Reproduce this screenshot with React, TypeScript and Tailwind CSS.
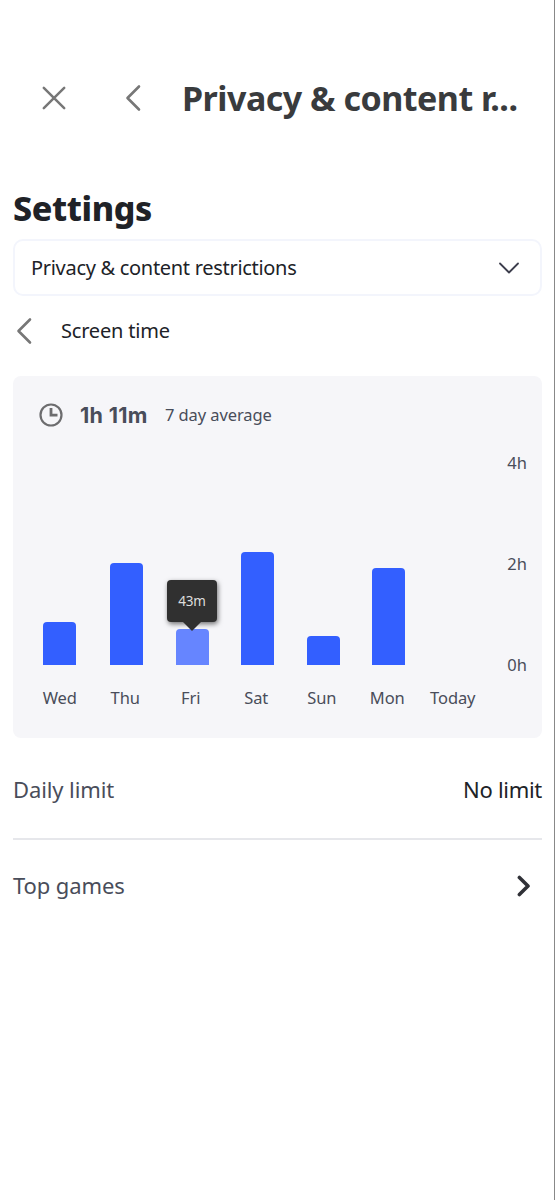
import { useState } from 'react'

interface Day {
  label: string
  minutes: number
  bar: string
}

const PX_PER_HOUR = 50.5

const days: Day[] = [
  { label: 'Wed', minutes: 51, bar: 'mr-[1.5px]' },
  { label: 'Thu', minutes: 121, bar: '' },
  { label: 'Fri', minutes: 43, bar: '' },
  { label: 'Sat', minutes: 134, bar: '' },
  { label: 'Sun', minutes: 35, bar: '' },
  { label: 'Mon', minutes: 115.5, bar: '' },
  { label: 'Today', minutes: 0, bar: '' }
]

function ChevronLeft({ className }: { className: string }) {
  return (
    <svg className={className} viewBox="0 0 16 28" fill="none" stroke="currentColor" strokeWidth="2.6" strokeLinecap="round" strokeLinejoin="round">
      <path d="M14 2.5 2.5 14 14 25.5" />
    </svg>
  )
}

function Header() {
  return (
    <header className="flex h-[60px] items-center text-[#777777]">
      <button className="ml-[42px]" aria-label="Close">
        <svg className="block size-6" viewBox="0 0 24 24" fill="none" stroke="currentColor" strokeWidth="2.5" strokeLinecap="round">
          <path d="M1.8 1.8 22.2 22.2M22.2 1.8 1.8 22.2" />
        </svg>
      </button>
      <button className="ml-[59px]" aria-label="Back">
        <ChevronLeft className="block h-7 w-4" />
      </button>
      <h1 className="ml-[41px] whitespace-nowrap text-[34px] leading-[44px] font-bold tracking-[-0.5px] text-[#393b3d]">
        Privacy &amp; content r...
      </h1>
    </header>
  )
}

function Tooltip({ text }: { text: string }) {
  return (
    <div className="absolute bottom-[calc(100%+7px)] left-1/2 flex h-[42px] w-[50px] -translate-x-1/2 items-center justify-center rounded-[4px] bg-[#303030] text-[13.5px] tracking-[-0.2px] text-[#dddddd] shadow-[1px_2px_5px_rgba(0,0,0,0.55)]">
      {text}
      <svg className="absolute top-full h-[9px] w-[18px]" viewBox="0 0 18 9">
        <path d="M0 0H18L9 9Z" fill="#303030" />
      </svg>
    </div>
  )
}

function Chart() {
  const [selected, setSelected] = useState('Fri')

  return (
    <div className="mt-[21px] flex">
      <div className="w-[459px] pl-[14px]">
        <div className="flex h-[214px] items-end gap-[32.5px] pl-4">
          {days.map((day) => (
            <button
              key={day.label}
              aria-label={day.label}
              className={`relative w-[33px] shrink-0 rounded-t-[4px] ${day.bar} ${
                selected === day.label ? 'bg-[#6685ff]' : 'bg-[#335fff]'
              }`}
              style={{ height: (day.minutes / 60) * PX_PER_HOUR }}
              onClick={() => setSelected(day.label)}
            >
              {selected === day.label && <Tooltip text="43m" />}
            </button>
          ))}
        </div>
        <div className="mt-[21px] flex w-[459px] text-[16.5px] leading-6 tracking-[-0.1px] text-[#494d5a]">
          {days.map((day) => (
            <span key={day.label} className="w-[65.5px] shrink-0 text-center">{day.label}</span>
          ))}
        </div>
      </div>
      <div className="flex h-[226px] flex-1 flex-col justify-between pr-[15px] text-right text-[16.5px] leading-6 text-[#494d5a]">
        <span>4h</span>
        <span>2h</span>
        <span>0h</span>
      </div>
    </div>
  )
}

export default function App() {
  return (
    <div className="h-[1200px] w-[555px] overflow-hidden border-r border-[#888888] bg-white pt-[68px] font-['Noto_Sans',sans-serif] text-[#202227]">
      <Header />

      <main className="ml-[13px] w-[529px]">
        <h2 className="mt-[58px] text-[34px] leading-[44px] font-extrabold tracking-[-0.4px]">Settings</h2>

        <button className="mt-[9px] flex h-[57px] w-full items-center justify-between rounded-[10px] border-2 border-[#f3f5fc] pr-[20px] pl-[16px] text-[20px] tracking-[-0.3px]">
          <span>Privacy &amp; content restrictions</span>
          <svg className="h-3 w-[22px]" viewBox="0 0 22 12" fill="none" stroke="#3d3e4d" strokeWidth="1.8" strokeLinecap="round" strokeLinejoin="round">
            <path d="M2 1.5 11 10.5 20 1.5" />
          </svg>
        </button>

        <div className="mt-[21px] flex h-7 items-center text-[20px] tracking-[-0.2px]">
          <ChevronLeft className="ml-[3px] h-7 w-4 text-[#777777]" />
          <span className="ml-[29px]">Screen time</span>
        </div>

        <section className="mt-[31px] h-[362px] rounded-lg bg-[#f6f6f9] pt-6">
          <div className="flex h-[30px] items-center text-[#494d5a]">
            <svg className="ml-[26px] size-6" viewBox="0 0 24 24" fill="none" stroke="#6d6d6f">
              <circle cx="12" cy="12" r="10.5" strokeWidth="2.2" />
              <path d="M12 5V12.2H18.5" strokeWidth="2.8" />
            </svg>
            <span className="ml-[17px] w-[85px] font-['Inter','Noto_Sans',sans-serif] text-[21.5px] font-bold tracking-[0.3px]">1h 11m</span>
            <span className="text-[16.5px] tracking-[-0.1px]">7 day average</span>
          </div>
          <Chart />
        </section>

        <div className="flex h-[102px] items-center justify-between border-b-2 border-[#e6e7eb] pt-[3px] text-[22px]">
          <span className="tracking-[-0.1px] text-[#494d5a]">Daily limit</span>
          <span className="tracking-[-0.3px]">No limit</span>
        </div>

        <div className="flex h-[91px] items-center justify-between text-[22px] tracking-[-0.1px] text-[#494d5a]">
          <span>Top games</span>
          <svg className="mr-[11px] h-[22px] w-[14px]" viewBox="0 0 14 22" fill="none" stroke="#303137" strokeWidth="3.6" strokeLinecap="round" strokeLinejoin="round">
            <path d="M2.4 2.5 11 11 2.4 19.5" />
          </svg>
        </div>
      </main>
    </div>
  )
}
